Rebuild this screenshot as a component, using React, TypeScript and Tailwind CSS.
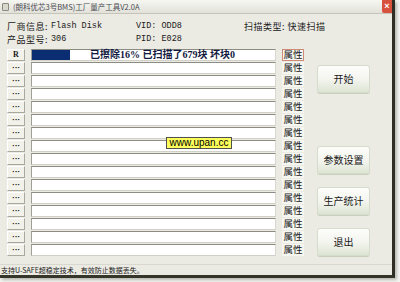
import React from "react";

const cjk = { fontFamily: '"Noto Sans CJK SC", "Liberation Sans", sans-serif' };
const mono = { fontFamily: '"Liberation Mono", "Noto Sans CJK SC", monospace' };

function SmallBtn({ label }: { label: string }) {
  return (
    <div
      className="ml-[7px] flex h-[12px] w-[18px] items-center justify-center border border-t-white border-l-white border-r-[#a8a89c] border-b-[#a8a89c] bg-[#f2f2ea] text-[8px] font-bold leading-none text-[#202020]"
      style={{ fontFamily: '"Liberation Serif", "DejaVu Sans", serif' }}
    >
      {label}
    </div>
  );
}

function AttrBtn({ focused }: { focused?: boolean }) {
  return (
    <div
      className={
        "ml-[6px] flex h-[12px] w-[22px] items-center justify-center whitespace-nowrap bg-[#f6f6f0] text-[9.5px] leading-none text-[#202020] " +
        (focused ? "border border-[#d08a78]" : "border border-[#f6f6f0]")
      }
      style={cjk}
    >
      属性
    </div>
  );
}

function Row({ first }: { first?: boolean }) {
  return (
    <div className="flex h-[13px] items-start">
      <SmallBtn label={first ? "R" : "···"} />
      <div className="relative ml-[6px] flex h-[12px] w-[245px] items-center border border-t-[#8c8c84] border-l-[#a0a098] border-r-[#d8d8d0] border-b-[#d0d0c8] bg-white">
        {first && (
          <>
            <div className="h-full w-[38px] bg-[#0b2d72]" />
            <span
              className="ml-[20px] whitespace-nowrap text-[10px] font-bold leading-none text-[#121a40]"
              style={{ fontFamily: '"Liberation Serif", "Noto Sans CJK SC", serif' }}
            >
              已擦除16% 已扫描了679块 坏块0
            </span>
          </>
        )}
      </div>
      <AttrBtn focused={first} />
    </div>
  );
}

function BigBtn({ label, className }: { label: string; className?: string }) {
  return (
    <div
      className={
        "flex h-[28px] w-[53px] items-center justify-center rounded-[3px] border border-[#d4dccb] bg-gradient-to-b from-[#fdfdfb] via-[#f4f5ef] to-[#dde5d4] text-[10px] leading-none text-[#1a1a1a] shadow-[0_1px_0_#c8d0bc] " +
        (className ?? "")
      }
      style={cjk}
    >
      {label}
    </div>
  );
}

export default function App() {
  const rows = Array.from({ length: 16 }, (_, i) => i);
  return (
    <div className="relative h-[282px] w-[400px] overflow-hidden bg-[#f4f4f2]">
      <div className="flex h-[278px] w-[395px] flex-col border-b-[3px] border-r-[3px] border-b-[#35352a] border-r-[#2e2e24] bg-[#ebeae3] shadow-[2px_2px_3px_#b8b8b0]">
        {/* title bar */}
        <div className="flex h-[14px] items-center border-b border-[#c4c4b8] bg-gradient-to-b from-[#f6f6f2] to-[#e2e2da]">
          <div className="ml-[2px] h-[8px] w-[7px] rounded-[1px] border border-[#8a8a80] bg-[#d8d8cc]" />
          <span className="ml-[4px] whitespace-nowrap text-[7.5px] leading-none text-[#4a4a52]" style={cjk}>
            (朗科优芯3号BMS)工厂量产工具V2.0A
          </span>
          <div
            className="ml-auto flex h-[13px] w-[10px] items-center justify-center self-start rounded-bl-[2px] bg-[#d8503e] text-[9px] font-bold leading-none text-white"
            style={{ fontFamily: '"Liberation Sans", sans-serif' }}
          >
            ×
          </div>
        </div>

        {/* info */}
        <div className="pt-[6px] text-[9px] leading-none text-[#202020]">
          <div className="flex h-[13px] items-center">
            <span className="ml-[7px] whitespace-nowrap tracking-[0.5px]" style={cjk}>厂商信息:</span>
            <span className="ml-[3px] w-[85px] whitespace-nowrap text-[8.5px]" style={mono}>Flash Disk</span>
            <span className="w-[108px] whitespace-nowrap text-[8.5px]" style={mono}>VID: ODD8</span>
            <span className="whitespace-nowrap tracking-[0.5px]" style={cjk}>扫描类型: 快速扫描</span>
          </div>
          <div className="flex h-[13px] items-center">
            <span className="ml-[7px] whitespace-nowrap tracking-[0.5px]" style={cjk}>产品型号:</span>
            <span className="ml-[3px] w-[85px] whitespace-nowrap text-[8.5px]" style={mono}>306</span>
            <span className="whitespace-nowrap text-[8.5px]" style={mono}>PID: E028</span>
          </div>
        </div>

        {/* main */}
        <div className="mt-[3px] flex">
          <div className="flex flex-col">
            {rows.map((i) => (
              <Row key={i} first={i === 0} />
            ))}
          </div>
          <div className="ml-[13px] flex flex-col">
            <BigBtn label="开始" className="mt-[16px]" />
            <BigBtn label="参数设置" className="mt-[53px]" />
            <BigBtn label="生产统计" className="mt-[13px]" />
            <BigBtn label="退出" className="mt-[13px]" />
          </div>
        </div>

        {/* status */}
        <div className="mt-auto flex h-[11px] items-center border-t border-[#d8d8d0]">
          <span className="ml-[1px] whitespace-nowrap text-[7px] leading-none text-[#202020]" style={cjk}>
            支持U-SAFE超稳定技术，有效防止数据丢失。
          </span>
        </div>
      </div>

      {/* watermark label */}
      <div
        className="absolute left-[166px] top-[137px] flex h-[12px] w-[66px] items-center justify-center border border-[#505050] bg-[#ffff5c] text-[10px] leading-none text-black"
        style={{ fontFamily: '"Liberation Sans", sans-serif' }}
      >
        www.upan.cc
      </div>
    </div>
  );
}
